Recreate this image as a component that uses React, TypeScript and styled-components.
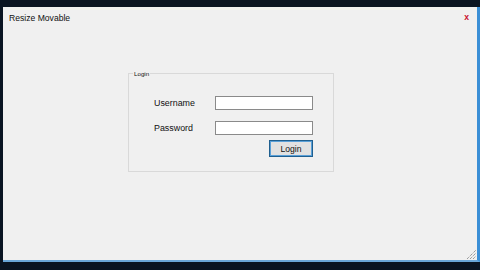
import styled, { createGlobalStyle } from "styled-components";

const GlobalStyle = createGlobalStyle`
  html, body {
    margin: 0;
    padding: 0;
    background: #0a1422;
  }
  * {
    box-sizing: border-box;
  }
`;

const Screen = styled.div`
  width: 480px;
  height: 270px;
  display: flex;
  flex-direction: column;
  padding: 7px 0 8px 3px;
  background: #0a1422;
  font-family: "Liberation Sans", Arial, sans-serif;
`;

const Window = styled.div`
  flex: 1;
  position: relative;
  display: flex;
  flex-direction: column;
  background: #f0f0f0;
  border-right: 3px solid #3b8fd6;
  border-bottom: 2px solid #6aa6d8;
`;

const TitleBar = styled.div`
  height: 22px;
  display: flex;
  align-items: center;
  justify-content: space-between;
  padding: 0 8px 0 6px;
`;

const Title = styled.span`
  font-size: 8.6px;
  color: #111;
`;

const CloseBtn = styled.span`
  font-size: 8.6px;
  font-weight: bold;
  color: #c8102e;
  line-height: 1;
  margin-top: -1px;
`;

const Content = styled.div`
  flex: 1;
  padding: 44px 0 0 125px;
`;

const GroupBox = styled.div`
  position: relative;
  width: 206px;
  height: 99px;
  border: 1px solid #d9d9d9;
  padding: 22px 0 0 25px;
`;

const Caption = styled.span`
  position: absolute;
  top: -3px;
  left: 4px;
  padding: 0 1px;
  font-size: 6.2px;
  color: #111;
  background: #f0f0f0;
  line-height: 6px;
`;

const Form = styled.div`
  display: grid;
  grid-template-columns: 61px 98px;
  row-gap: 11px;
  align-items: center;
`;

const Label = styled.span`
  font-size: 8.9px;
  color: #111;
`;

const Field = styled.input`
  width: 98px;
  height: 14px;
  border: 1px solid #8a8a8a;
  background: #fff;
  padding: 0 2px;
  margin: 0;
  outline: none;
`;

const Actions = styled.div`
  grid-column: 1 / 3;
  display: flex;
  justify-content: flex-end;
  margin-top: -6px;
`;

const Button = styled.button`
  width: 44px;
  height: 17px;
  margin: 0;
  padding: 0;
  font-family: "Liberation Sans", Arial, sans-serif;
  font-size: 8.6px;
  color: #111;
  background: #e1e1e1;
  border: 1px solid #1f5f8f;
  box-shadow: inset 0 0 0 1px #5aa0d8;
`;

const Grip = styled.svg`
  position: absolute;
  right: 1px;
  bottom: 1px;
`;

function ResizeGrip() {
  return (
    <Grip width="11" height="11" viewBox="0 0 11 11">
      {[3, 6, 9].map((d) => (
        <line
          key={d}
          x1={11 - d}
          y1="11"
          x2="11"
          y2={11 - d}
          stroke="#777"
          strokeWidth="1"
          strokeDasharray="1 1"
        />
      ))}
    </Grip>
  );
}

export default function App() {
  return (
    <>
      <GlobalStyle />
      <Screen>
        <Window>
          <TitleBar>
            <Title>Resize Movable</Title>
            <CloseBtn>x</CloseBtn>
          </TitleBar>
          <Content>
            <GroupBox>
              <Caption>Login</Caption>
              <Form>
                <Label>Username</Label>
                <Field type="text" />
                <Label>Password</Label>
                <Field type="password" />
                <Actions>
                  <Button>Login</Button>
                </Actions>
              </Form>
            </GroupBox>
          </Content>
          <ResizeGrip />
        </Window>
      </Screen>
    </>
  );
}
